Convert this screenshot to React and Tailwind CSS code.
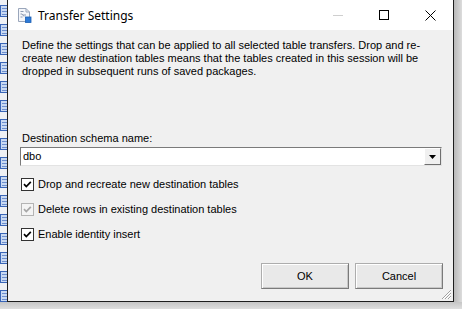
import React from "react";

function StripIcon() {
  return (
    <div className="h-[12px] w-[7px] shrink-0 border border-r-0 border-[#3a66b8] bg-[#c9d9f2] flex flex-col justify-center gap-[2px] pl-[1px]">
      <div className="h-[1px] w-[5px] bg-[#6d8fcf]" />
      <div className="h-[1px] w-[5px] bg-[#6d8fcf]" />
      <div className="h-[1px] w-[5px] bg-[#6d8fcf]" />
    </div>
  );
}

function Check({ disabled }) {
  return (
    <div
      className={
        "w-[13px] h-[13px] shrink-0 border flex items-center justify-center " +
        (disabled ? "border-[#b4b4b4] bg-[#f4f4f4]" : "border-[#333333] bg-white")
      }
    >
      <svg width="11" height="11" viewBox="0 0 11 11">
        <path
          d="M2 5.2 L4.3 7.6 L8.8 2.8"
          fill="none"
          stroke={disabled ? "#a6a6a6" : "#000"}
          strokeWidth="1.7"
        />
      </svg>
    </div>
  );
}

function Btn({ children }) {
  return (
    <div className="w-[88px] h-[26px] border border-[#adadad] border-b-[#7a7a7a] border-r-[#7a7a7a] bg-[#e9e9e9] flex items-center justify-center text-[11px] text-black shadow-[inset_1px_1px_0_#ffffff,inset_-1px_-1px_0_#c8c8c8]">
      {children}
    </div>
  );
}

export default function App() {
  const icons = Array.from({ length: 16 });
  const font = { fontFamily: '"Liberation Sans", Arial, sans-serif' };
  return (
    <div className="w-[462px] h-[309px] overflow-hidden flex flex-col bg-[#d2d2d2]" style={font}>
      <div className="flex h-[302px]">
        {/* left strip */}
        <div className="w-[7px] bg-[#eef0f4] flex flex-col pt-[5px] gap-[7px]">
          {icons.map((_, i) => (
            <StripIcon key={i} />
          ))}
        </div>
        {/* dialog */}
        <div className="w-[447px] border-x border-b border-[#1e1e1e] flex flex-col relative">
          {/* title bar */}
          <div className="h-[30px] bg-white flex items-center">
            <div className="pl-[9px] pr-[6px] flex items-center">
              <svg width="15" height="16" viewBox="0 0 15 16">
                <path d="M1.5 1.5 H9 L12.5 5 V14.5 H1.5 Z" fill="#f4f6fa" stroke="#9aa6bb" />
                <path d="M9 1.5 V5 H12.5" fill="none" stroke="#9aa6bb" />
                <path d="M3.5 4.5 H6.5 M3.5 7 H5 M6 8 H9 M3.5 10 H5.5 M5 7 L7 9.5" stroke="#8c9ab3" strokeWidth="1" />
                <rect x="8.5" y="10" width="5.5" height="5.5" fill="#2e7ad6" stroke="#1c5fb3" strokeWidth="0.8" />
              </svg>
            </div>
            <span
              className="text-[12px] text-black pt-[1px]"
              style={{ fontFamily: '"Noto Sans", "Open Sans", sans-serif' }}
            >
              Transfer Settings
            </span>
            <div className="ml-auto flex h-full">
              <div className="w-[46px] h-full flex items-center justify-center">
                <div className="w-[10px] h-[1px] bg-[#cfcfcf]" />
              </div>
              <div className="w-[46px] h-full flex items-center justify-center">
                <div className="w-[10px] h-[10px] border border-black" />
              </div>
              <div className="w-[46px] h-full flex items-center justify-center">
                <svg width="11" height="11" viewBox="0 0 11 11">
                  <path d="M0.5 0.5 L10.5 10.5 M10.5 0.5 L0.5 10.5" stroke="#000" strokeWidth="1" />
                </svg>
              </div>
            </div>
          </div>
          {/* content */}
          <div className="flex-1 bg-[#f0f0f0] flex flex-col text-[11px] leading-[13px] text-black">
            <div className="mt-[9px] pl-[14px] whitespace-nowrap">
              Define the settings that can be applied to all selected table transfers. Drop and re-
              <br />
              create new destination tables means that the tables created in this session will be
              <br />
              dropped in subsequent runs of saved packages.
            </div>
            <div className="mt-[54px] pl-[14px]">Destination schema name:</div>
            <div className="mt-[2px] ml-[12px] w-[422px] h-[19px] bg-white border border-[#7a7a7a] border-r-[#e3e3e3] border-b-[#e3e3e3] flex items-center">
              <span className="pl-[2px] flex-1">dbo</span>
              <div className="w-[17px] h-[17px] bg-[#f0f0f0] border border-[#ffffff] border-r-[#6f6f6f] border-b-[#6f6f6f] flex items-center justify-center">
                <svg width="7" height="4" viewBox="0 0 7 4">
                  <path d="M0 0 H7 L3.5 4 Z" fill="#000" />
                </svg>
              </div>
            </div>
            <div className="mt-[12px] pl-[13px] flex flex-col gap-[12px]">
              <div className="h-[13px] flex items-center gap-[4px]">
                <Check />
                <span>Drop and recreate new destination tables</span>
              </div>
              <div className="h-[13px] flex items-center gap-[4px]">
                <Check disabled />
                <span>Delete rows in existing destination tables</span>
              </div>
              <div className="h-[13px] flex items-center gap-[4px]">
                <Check />
                <span>Enable identity insert</span>
              </div>
            </div>
            <div className="mt-[22px] pr-[10px] flex justify-end gap-[6px]">
              <Btn>OK</Btn>
              <Btn>Cancel</Btn>
            </div>
          </div>
          {/* resize grip */}
          <svg className="absolute right-[1px] bottom-[1px]" width="12" height="12" viewBox="0 0 12 12">
            <path d="M11 2 L2 11 M11 5 L5 11 M11 8 L8 11" stroke="#a0a0a0" strokeWidth="1" />
            <path d="M11 3 L3 11 M11 6 L6 11 M11 9 L9 11" stroke="#ffffff" strokeWidth="1" />
          </svg>
        </div>
        {/* right shadow */}
        <div className="flex-1 bg-gradient-to-r from-[#b9b9b9] to-[#dcdcdc]" />
      </div>
      <div className="flex-1 bg-gradient-to-b from-[#c6c6c6] to-[#dedede]" />
    </div>
  );
}
